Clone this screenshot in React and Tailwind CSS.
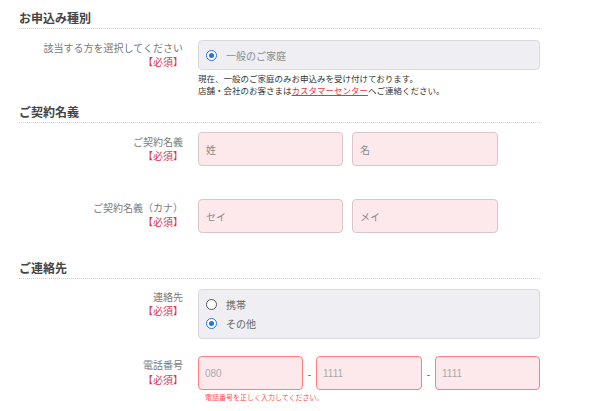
const box = "rounded-[4px] border border-[#dadade] bg-[#efeff3]";
const nameInput =
  "h-[34px] rounded-[4px] border border-[#d9c6c9] bg-[#fde9ec] px-[7px] text-[10px] text-[#555] outline-none placeholder:text-[#8a8a8a]";
const telInput =
  "h-[34px] rounded-[4px] border-[1.5px] border-[#ff7d7d] bg-[#fde9ec] px-[6px] text-[10px] text-[#555] outline-none placeholder:text-[#a9a9a9] font-['Liberation_Sans','Noto_Sans_CJK_JP',sans-serif]";

function Heading({ children, className = "" }) {
  return (
    <div
      className={`border-b border-dotted border-[#cfcfcf] pb-[2px] text-[12px] font-bold leading-[16px] text-[#444] ${className}`}
    >
      {children}
    </div>
  );
}

function Row({ label, labelClass = "pt-[1px] leading-[14px]", className = "", children }) {
  return (
    <div className={`flex items-start ${className}`}>
      <div className={`w-[164px] shrink-0 text-right text-[10px] text-[#7a7a7a] ${labelClass}`}>
        <div>{label}</div>
        <div className="text-[#d8374b]">【必須】</div>
      </div>
      <div className="ml-[15px] w-[342px]">{children}</div>
    </div>
  );
}

function Radio({ checked }) {
  return checked ? (
    <span className="flex h-[11px] w-[11px] items-center justify-center rounded-full border-[1.5px] border-[#1f74e6] bg-white">
      <span className="h-[5px] w-[5px] rounded-full bg-[#1f74e6]" />
    </span>
  ) : (
    <span className="h-[11px] w-[11px] rounded-full border-[1.5px] border-[#555] bg-white" />
  );
}

export default function App() {
  return (
    <div className="h-[411px] w-[600px] overflow-hidden bg-white px-[19px] pt-[10px] font-['Noto_Sans_CJK_JP',sans-serif]">
      <div className="w-[521px]">
        {/* お申込み種別 */}
        <Heading>お申込み種別</Heading>
        <Row className="mt-[11px]" label="該当する方を選択してください">
          <div className={`${box} flex h-[30px] items-center gap-[9px] pl-[7px]`}>
            <Radio checked />
            <span className="text-[10px] text-[#8a8a8a]">一般のご家庭</span>
          </div>
          <div className="mt-[2px] text-[8.5px] leading-[12px] text-[#333]">
            <div>現在、一般のご家庭のみお申込みを受け付けております。</div>
            <div>
              店舗・会社のお客さまは
              <span className="text-[#e8333c] underline">カスタマーセンター</span>
              へご連絡ください。
            </div>
          </div>
        </Row>

        {/* ご契約名義 */}
        <Heading className="mt-[8px]">ご契約名義</Heading>
        <Row className="mt-[9px]" label="ご契約名義" labelClass="pt-[3px] leading-[14px]">
          <div className="flex gap-[9px]">
            <input readOnly placeholder="姓" className={`${nameInput} w-[145px]`} />
            <input readOnly placeholder="名" className={`${nameInput} w-[146px]`} />
          </div>
        </Row>
        <Row className="mt-[33px]" label="ご契約名義（カナ）" labelClass="pt-[2px] leading-[14px]">
          <div className="flex gap-[9px]">
            <input readOnly placeholder="セイ" className={`${nameInput} w-[145px]`} />
            <input readOnly placeholder="メイ" className={`${nameInput} w-[146px]`} />
          </div>
        </Row>

        {/* ご連絡先 */}
        <Heading className="mt-[27px]">ご連絡先</Heading>
        <Row className="mt-[10px]" label="連絡先">
          <div className={`${box} flex h-[50px] flex-col justify-center gap-[8px] pl-[7px]`}>
            <label className="flex items-center gap-[9px]">
              <Radio />
              <span className="text-[10px] leading-[11px] text-[#666]">携帯</span>
            </label>
            <label className="flex items-center gap-[9px]">
              <Radio checked />
              <span className="text-[10px] leading-[11px] text-[#666]">その他</span>
            </label>
          </div>
        </Row>
        <Row className="mt-[17px]" label="電話番号" labelClass="pt-[1px] leading-[15px]">
          <div className="flex items-center">
            <input readOnly placeholder="080" className={`${telInput} w-[105px]`} />
            <span className="w-[13px] text-center text-[10px] text-[#444]">-</span>
            <input readOnly placeholder="1111" className={`${telInput} w-[106px]`} />
            <span className="w-[13px] text-center text-[10px] text-[#444]">-</span>
            <input readOnly placeholder="1111" className={`${telInput} w-[105px]`} />
          </div>
          <div className="mt-[2px] pl-[7px] text-[7px] leading-[10px] text-[#ff4d4d]">
            電話番号を正しく入力してください。
          </div>
        </Row>
      </div>
    </div>
  );
}
